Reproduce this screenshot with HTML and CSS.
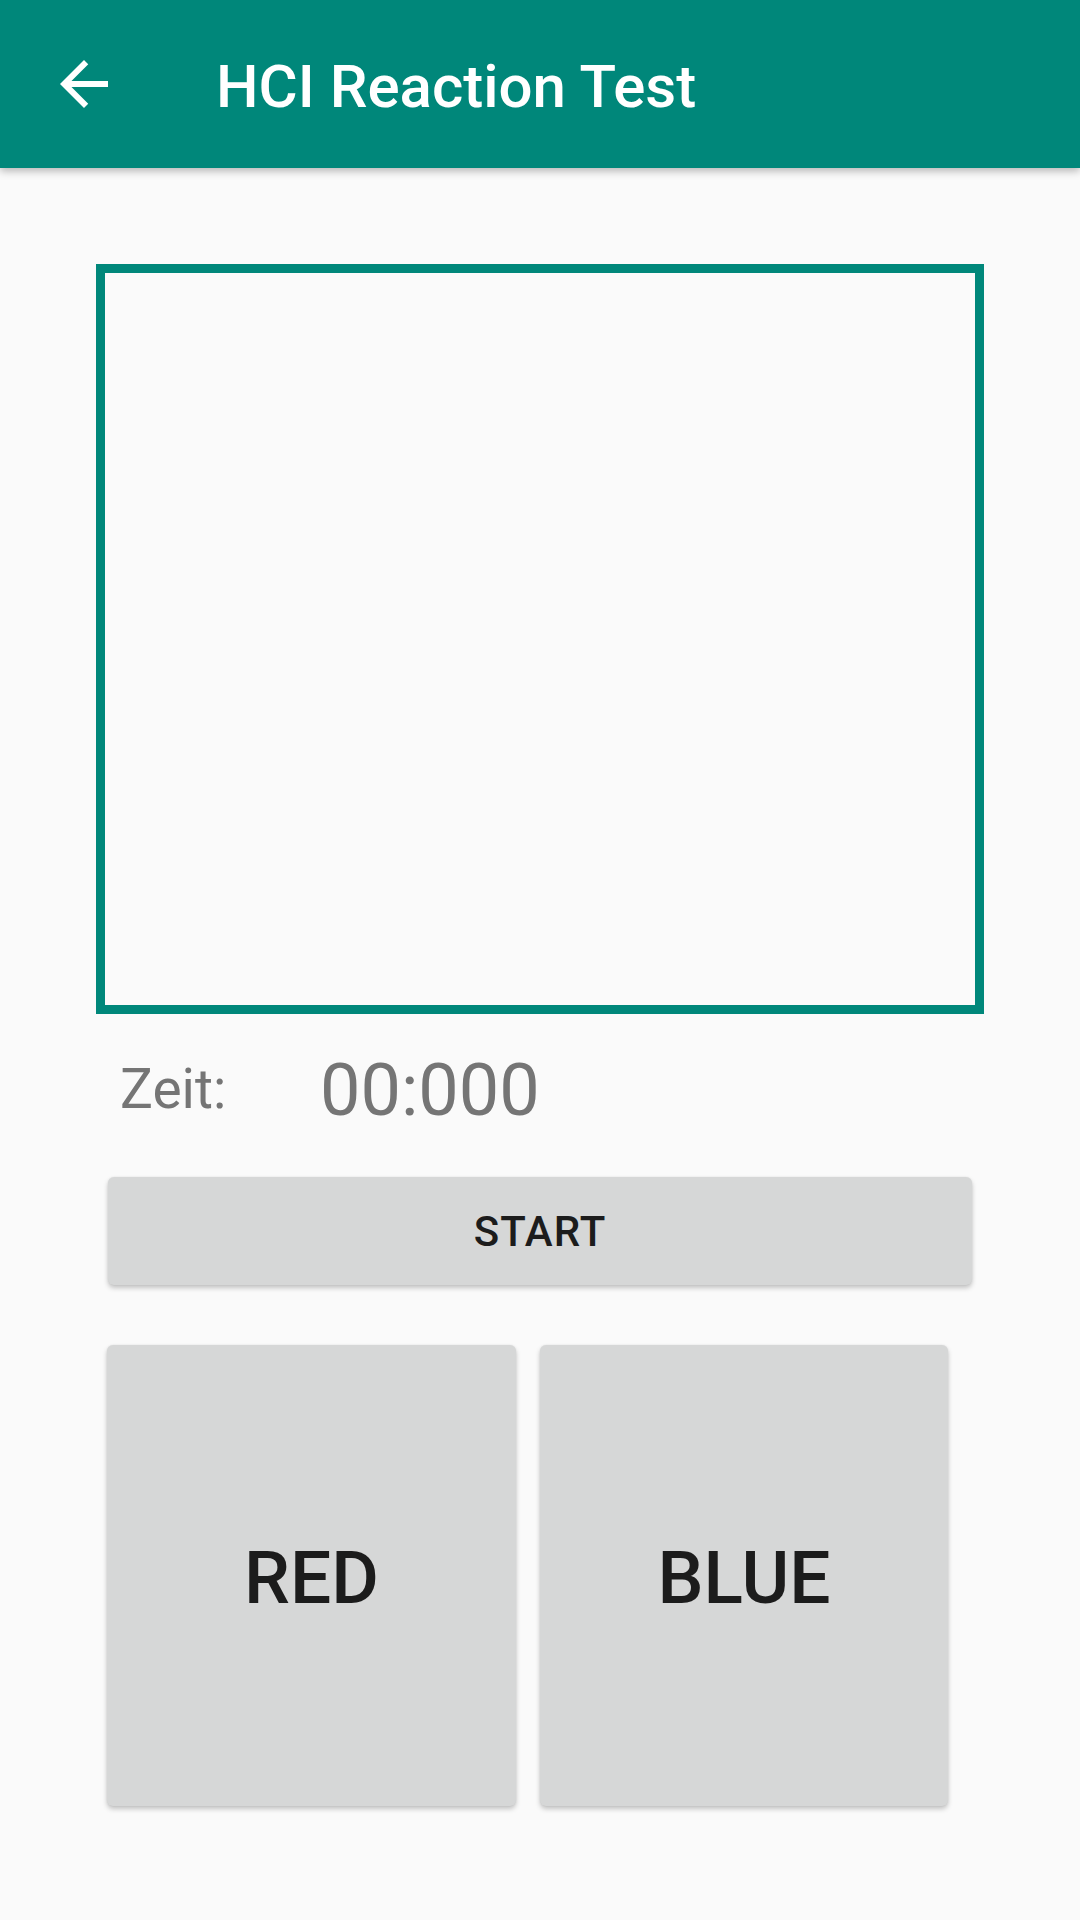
FILE: index.html
```html
<!DOCTYPE html>
<html>
<head>
<meta charset="utf-8">
<link rel="stylesheet" href="styles.css">
</head>
<body>
<header class="appbar">
  <svg class="back" viewBox="0 0 24 24" width="72" height="72"><path fill="#fff" d="M20 11H7.83l5.59-5.59L12 4l-8 8 8 8 1.41-1.41L7.83 13H20v-2z"/></svg>
  <div class="title">HCI Reaction Test</div>
</header>
<main class="content">
  <div class="stage"></div>
  <div class="timerow">
    <span class="label">Zeit:</span>
    <span class="time">00:000</span>
  </div>
  <button class="btn start">START</button>
  <div class="choices">
    <button class="btn choice red">RED</button>
    <button class="btn choice blue">BLUE</button>
  </div>
</main>
</body>
</html>
```
FILE: styles.css
```css
html, body {
  margin: 0;
  padding: 0;
  background: #fafafa;
  font-family: Roboto, "Noto Sans", sans-serif;
}
body {
  width: 1080px;
  height: 1920px;
  overflow: hidden;
}
.appbar {
  height: 168px;
  background: #00877a;
  display: flex;
  align-items: flex-start;
  box-shadow: 0 3px 8px rgba(0,0,0,0.28);
  position: relative;
  z-index: 1;
}
.back {
  margin: 48px 0 0 48px;
  flex: none;
}
.title {
  margin: 57px 0 0 96px;
  color: #fff;
  font-size: 60px;
  line-height: 60px;
  font-weight: 500;
}
.content {
  padding: 0 96px;
  display: flex;
  flex-direction: column;
}
.stage {
  margin-top: 96px;
  height: 750px;
  box-sizing: border-box;
  border: 9px solid #00877a;
}
.timerow {
  display: flex;
  align-items: flex-start;
  height: 112px;
}
.label {
  margin: 48px 0 0 24px;
  font-size: 55px;
  line-height: 55px;
  color: #757575;
  width: 200px;
}
.time {
  margin-top: 41px;
  font-size: 72px;
  line-height: 72px;
  color: #757575;
}
.btn {
  border: none;
  background: #d6d7d7;
  border-radius: 6px;
  box-shadow: 0 3px 5px rgba(0,0,0,0.22), 0 0 2px rgba(0,0,0,0.08);
  font-family: Roboto, "Noto Sans", sans-serif;
  font-weight: 500;
  color: #1c1c1c;
  padding: 0;
}
.start {
  margin: 51px 12px 0 12px;
  height: 108px;
  font-size: 42px;
  letter-spacing: 1px;
}
.choices {
  display: flex;
  gap: 24px;
  margin-top: 60px;
  padding-left: 11px;
}
.choice {
  width: 409px;
  height: 461px;
  font-size: 73px;
  padding-top: 4px;
}
.blue {
  width: 408px;
}
```
